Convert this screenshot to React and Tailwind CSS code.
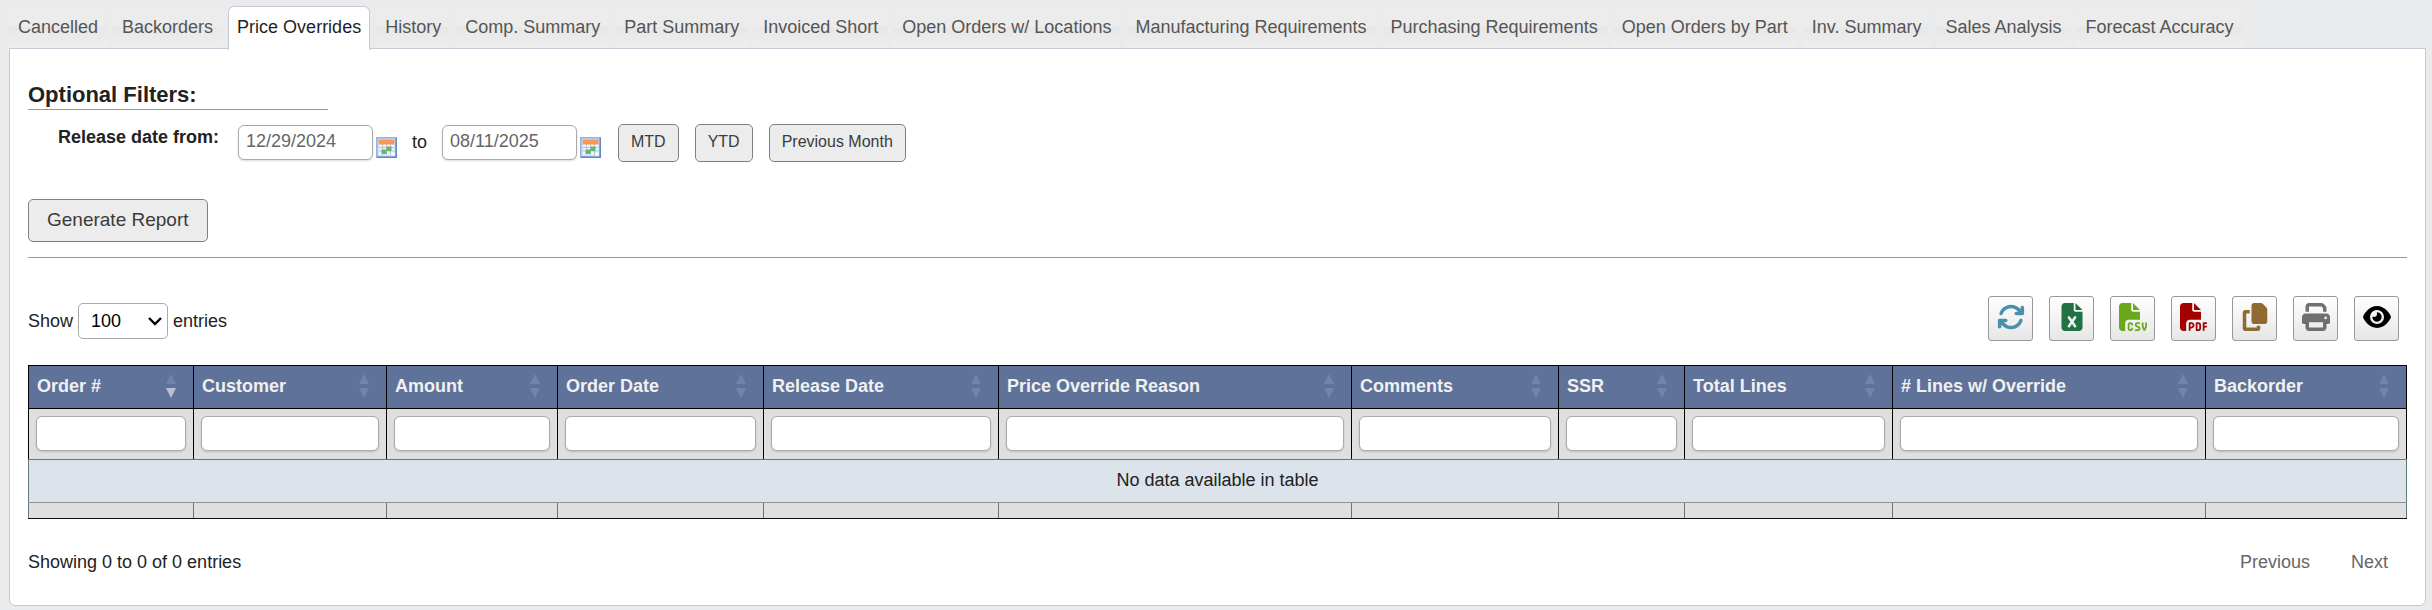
import {
  FaArrowsRotate,
  FaCopy,
  FaEye,
  FaFileCsv,
  FaFileExcel,
  FaFilePdf,
  FaPrint,
} from 'react-icons/fa6';

const tabs = [
  'Cancelled',
  'Backorders',
  'Price Overrides',
  'History',
  'Comp. Summary',
  'Part Summary',
  'Invoiced Short',
  'Open Orders w/ Locations',
  'Manufacturing Requirements',
  'Purchasing Requirements',
  'Open Orders by Part',
  'Inv. Summary',
  'Sales Analysis',
  'Forecast Accuracy',
];

const columns = [
  { label: 'Order #', width: 'w-[165px]', sorted: true },
  { label: 'Customer', width: 'w-[193px]' },
  { label: 'Amount', width: 'w-[171px]' },
  { label: 'Order Date', width: 'w-[206px]' },
  { label: 'Release Date', width: 'w-[235px]' },
  { label: 'Price Override Reason', width: 'w-[353px]' },
  { label: 'Comments', width: 'w-[207px]' },
  { label: 'SSR', width: 'w-[126px]' },
  { label: 'Total Lines', width: 'w-[208px]' },
  { label: '# Lines w/ Override', width: 'w-[313px]' },
  { label: 'Backorder', width: 'w-[201px]' },
];

const tools = [
  { label: 'Refresh', Icon: FaArrowsRotate, color: 'text-[#4a90ab]' },
  { label: 'Export to Excel', Icon: FaFileExcel, color: 'text-[#1f7244]' },
  { label: 'Export to CSV', Icon: FaFileCsv, color: 'text-[#6aa71a]' },
  { label: 'Export to PDF', Icon: FaFilePdf, color: 'text-[#a30000]' },
  { label: 'Copy', Icon: FaCopy, color: 'text-[#8f6a33]' },
  { label: 'Print', Icon: FaPrint, color: 'text-[#707070]' },
  { label: 'Column visibility', Icon: FaEye, color: 'text-black' },
];

const inputClass = 'h-[35px] rounded-md border border-[#aaaaaa] bg-white pb-[2px] text-[#666666] shadow-[0_1px_2px_rgba(0,0,0,0.15)]';
const buttonClass = 'rounded-[5px] border border-[#808080] bg-[#ececec] pb-[2px] text-[#3b3b3b]';

function CalendarIcon() {
  return (
    <svg viewBox="0 0 21 21" className="h-[21px] w-[21px]" aria-hidden="true">
      <rect x="0.75" y="0.75" width="19.5" height="19.5" fill="#cfe0f6" stroke="#8fb3e6" strokeWidth="1.5" />
      <path d="M20.25 1v19.25H1" fill="none" stroke="#5f88c8" strokeWidth="1.5" />
      <rect x="3" y="6" width="15" height="12" fill="#f1f6fd" />
      <path d="M3 10.5h15M3 14h15M6.5 7v11M10.5 7v11M14.5 7v11" stroke="#a9c3ea" />
      <rect x="2.5" y="2.5" width="16" height="5" fill="#fb9655" />
      <rect x="10.5" y="9.5" width="5" height="4.5" fill="#6bb566" />
      <rect x="5.5" y="12.5" width="5" height="4.5" fill="#6bb566" />
      <path d="M15 18.5l3.5-3.5v3.5z" fill="#ffffff" />
    </svg>
  );
}

function DateField({ label, value }) {
  return (
    <div className="mb-px flex items-end gap-[3px]">
      <input type="text" aria-label={label} defaultValue={value} className={`${inputClass} w-[135px] px-[7px]`} />
      <button type="button" aria-label={`Pick ${label}`} className="mb-[2px]">
        <CalendarIcon />
      </button>
    </div>
  );
}

function SortArrows({ sorted }) {
  return (
    <svg viewBox="0 0 10 24" className="mr-[9px] h-6 w-[10px]" fill="#e9eaec" aria-hidden="true">
      <path d="M0 10L5 0l5 10z" opacity="0.15" />
      <path d="M0 14h10L5 24z" opacity={sorted ? 0.65 : 0.15} />
    </svg>
  );
}

function TabStrip() {
  return (
    <nav className="flex gap-[6px] whitespace-nowrap pt-[6px]">
      {tabs.map((tab) =>
        tab === 'Price Overrides' ? (
          <a key={tab} href="#" aria-current="page" className="z-10 -mb-[2px] h-11 rounded-t-md border border-b-0 border-[#c5c9d3] bg-white px-2 pt-2 text-[#1f1f1f]">
            {tab}
          </a>
        ) : (
          <a key={tab} href="#" className="h-[42px] rounded-t-md bg-linear-to-b from-[#ececec] from-50% via-[#e7e7e7] via-50% to-[#eeeeee] px-[9px] pt-[9px] text-[#555555]">
            {tab}
          </a>
        )
      )}
    </nav>
  );
}

function Filters() {
  return (
    <section>
      <h2 className="w-[300px] border-b border-[#999999] pt-px text-[22px] leading-7 font-bold text-[#222222]">Optional Filters:</h2>
      <div className="mt-[14px] flex items-center pl-[30px]">
        <span className="mb-3 w-[180px] font-bold">Release date from:</span>
        <DateField label="start date" value="12/29/2024" />
        <span className="mb-[2px] w-[45px] text-center">to</span>
        <DateField label="end date" value="08/11/2025" />
        <div className="ml-[17px] flex gap-4 text-base">
          <button type="button" className={`${buttonClass} h-[38px] px-3`}>MTD</button>
          <button type="button" className={`${buttonClass} h-[38px] px-3`}>YTD</button>
          <button type="button" className={`${buttonClass} h-[38px] px-3`}>Previous Month</button>
        </div>
      </div>
      <button type="button" className={`${buttonClass} mt-[37px] h-[43px] px-[18px] text-[19px]`}>Generate Report</button>
    </section>
  );
}

function PageLength() {
  return (
    <label className="mt-[7px] flex items-center gap-[5px]">
      Show
      <span className="relative">
        <select defaultValue="100" className="block h-9 w-[90px] appearance-none rounded-[5px] border border-[#aaaaaa] bg-white pl-3 text-black">
          <option>10</option>
          <option>25</option>
          <option>50</option>
          <option>100</option>
        </select>
        <svg viewBox="0 0 14 9" className="pointer-events-none absolute top-[14px] right-[6px] h-[9px] w-[14px]" fill="none" stroke="#000000" strokeWidth="2.4" aria-hidden="true">
          <path d="M1 1l6 6 6-6" />
        </svg>
      </span>
      entries
    </label>
  );
}

function ResultsTable() {
  return (
    <table className="w-full table-fixed border-collapse">
      <colgroup>
        {columns.map((col) => (
          <col key={col.label} className={col.width} />
        ))}
      </colgroup>
      <thead>
        <tr className="h-[43px] bg-[#5f739a] text-[#f0f0f0]">
          {columns.map((col) => (
            <th key={col.label} scope="col" className="border border-black px-2 pt-0 pb-[2px] text-left">
              <div className="flex items-center justify-between">
                {col.label}
                <SortArrows sorted={col.sorted} />
              </div>
            </th>
          ))}
        </tr>
        <tr className="h-[51px] bg-[#dfdfdf]">
          {columns.map((col) => (
            <td key={col.label} className="border border-black border-b-[#627980] px-[7px] pt-0 pb-[2px]">
              <input type="text" aria-label={`Filter ${col.label}`} className={`${inputClass} block w-full px-2`} />
            </td>
          ))}
        </tr>
      </thead>
      <tbody>
        <tr className="h-[43px] bg-[#dce3eb]">
          <td colSpan={columns.length} className="border border-[#627980] border-b-[#8f9499] px-0 pt-0 pb-[2px] text-center">
            No data available in table
          </td>
        </tr>
      </tbody>
      <tfoot>
        <tr className="h-4 bg-[#dfdfdf]">
          {columns.map((col) => (
            <td key={col.label} className="border border-[#627980] border-t-[#8f9499] border-b-[#111111] p-0" />
          ))}
        </tr>
      </tfoot>
    </table>
  );
}

export default function App() {
  return (
    <div className="min-h-screen bg-[#eaebed] pr-[6px] pb-1 pl-[9px] font-['Liberation_Sans',Arial,sans-serif] text-[18px] leading-6 text-[#222222]">
      <TabStrip />
      <main className="rounded-b-md border border-[#c5c9d3] bg-white px-[18px] pt-[31px] pb-[31px]">
        <Filters />
        <hr className="mt-[15px] border-[#999999]" />

        <div className="mt-[38px] flex items-start justify-between">
          <PageLength />
          <div className="mr-2 flex gap-4">
            {tools.map(({ label, Icon, color }) => (
              <button
                key={label}
                type="button"
                aria-label={label}
                className={`${color} flex h-[45px] w-[45px] items-center justify-center rounded-[3px] border border-[#999999] bg-linear-to-b from-white to-[#e6e6e6] pb-1`}
              >
                <Icon className="h-7 w-auto" />
              </button>
            ))}
          </div>
        </div>

        <div className="mt-6">
          <ResultsTable />
        </div>

        <div className="mt-[31px] flex items-center justify-between">
          <p>Showing 0 to 0 of 0 entries</p>
          <div className="mr-px flex gap-[5px] text-[#666666]">
            <button type="button" className="px-[18px]">Previous</button>
            <button type="button" className="px-[18px]">Next</button>
          </div>
        </div>
      </main>
    </div>
  );
}
